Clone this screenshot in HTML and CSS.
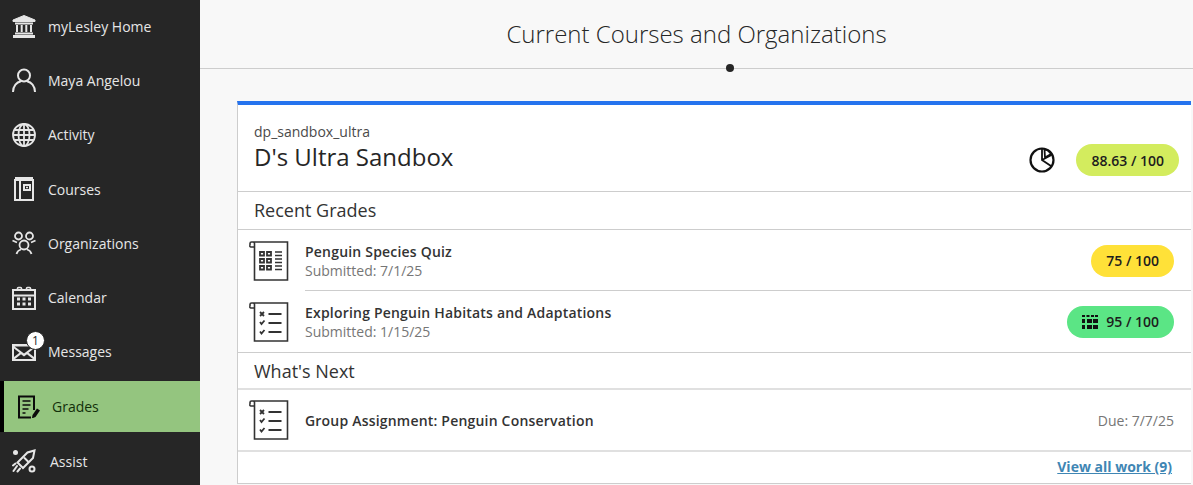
FILE: index.html
```html
<!DOCTYPE html>
<html lang="en">
<head>
  <meta charset="UTF-8">
  <title>Current Courses and Organizations</title>
  <link rel="stylesheet" href="styles.css">
</head>
<body>

  <div class="app">
    <nav class="sidebar">
      <a class="nav-item">
        <svg class="nav-icon" viewBox="0 0 24 24" fill="none" stroke="currentColor" stroke-width="2">
          <path d="M12 1.5 23 6v1.5H1V6z" fill="currentColor" stroke-width="1"/>
          <path d="M3 9.5h18M5 11v7M9.700 11v7M14.300 11v7M19 11v7M3 19.500h18"/>
          <path d="M1 22.500h22" stroke-width="3"/>
        </svg>
        <span>myLesley Home</span>
      </a>
      <a class="nav-item">
        <svg class="nav-icon" viewBox="0 0 24 24" fill="none" stroke="currentColor" stroke-width="2">
          <circle cx="12" cy="7.500" r="6"/>
          <path d="M1 24c0-6 4-10 7.500-10.500M23 24c0-6-4-10-7.500-10.500" stroke-linecap="round"/>
        </svg>
        <span>Maya Angelou</span>
      </a>
      <a class="nav-item">
        <svg class="nav-icon" viewBox="0 0 24 24" fill="none" stroke="currentColor" stroke-width="1.800">
          <circle cx="12" cy="12" r="11"/>
          <ellipse cx="12" cy="12" rx="5.500" ry="11"/>
          <path d="M12 1v22M1 12h22M2.500 7h19M2.500 17h19"/>
        </svg>
        <span>Activity</span>
      </a>
      <a class="nav-item">
        <svg class="nav-icon" viewBox="0 0 24 24" fill="none" stroke="currentColor" stroke-width="2">
          <path d="M3 3h18v20H3zM3 1h18M8 3v20"/>
          <path d="M12 8h6v5h-6z"/>
          <path d="M14 10.500h2" stroke-width="1.500"/>
        </svg>
        <span>Courses</span>
      </a>
      <a class="nav-item">
        <svg class="nav-icon" viewBox="0 0 24 24" fill="none" stroke="currentColor" stroke-width="1.800">
          <circle cx="6.500" cy="5" r="3.500"/>
          <circle cx="17.500" cy="5" r="3.500"/>
          <circle cx="12" cy="14" r="4.500"/>
          <path d="M0.500 9.500 5 11.500M23.500 9.500 19 11.500M4.500 23c.8-2.800 2.500-4 4.500-4.500M19.500 23c-.8-2.800-2.500-4-4.500-4.500"/>
        </svg>
        <span>Organizations</span>
      </a>
      <a class="nav-item">
        <svg class="nav-icon" viewBox="0 0 24 24" fill="none" stroke="currentColor" stroke-width="2">
          <path d="M1 4h22v19H1zM1 9.500h22"/>
          <path d="M5.500 5V2.500a1 1 0 0 1 1-1h2a1 1 0 0 1 1 1V5M14.500 5V2.500a1 1 0 0 1 1-1h2a1 1 0 0 1 1 1V5" stroke-width="1.600"/>
          <path d="M5 13h3M10.500 13h3M16 13h3M5 18h3M10.500 18h3M16 18h3" stroke-width="3"/>
        </svg>
        <span>Calendar</span>
      </a>
      <a class="nav-item">
        <span class="nav-icon-wrap">
          <svg class="nav-icon" viewBox="0 0 24 24" fill="currentColor">
            <path d="M0 4h24v17H0zM2.500 6.500 12 13.500 21.500 6.500zM2 8.500V17l5.500-4.300zM22 8.500 16.500 12.700 22 17zM3 19h18l-6-4.800-3 2.300-3-2.300z" fill-rule="evenodd"/>
          </svg>
          <span class="badge">1</span>
        </span>
        <span>Messages</span>
      </a>
      <a class="nav-item active">
        <svg class="nav-icon" viewBox="0 0 24 24" fill="none" stroke="currentColor" stroke-width="2">
          <path d="M17 15V1.500H2v21h12"/>
          <path d="M5.500 6h8M5.500 10h8M5.500 14h6M5.500 18h3" stroke-width="1.600"/>
          <path d="M16 23l-1 0 .5-3L20 13.500l3 2-4.500 6.500z" fill="currentColor" stroke="none"/>
        </svg>
        <span>Grades</span>
      </a>
      <a class="nav-item assist">
        <svg class="nav-icon" viewBox="0 0 24 24" fill="none" stroke="currentColor" stroke-width="2">
          <path d="M22.500 1.500 21 9 11 19l-5.500-5.500L15.500 3.500z"/>
          <path d="M12 8.500l4.500 4.500"/>
          <path d="M5 17 1.500 22M8 19.500 5.500 22.500M3.500 14.500 1 16.500" stroke-linecap="round"/>
          <circle cx="20" cy="20" r="2.500"/>
          <circle cx="3.500" cy="3.500" r="2.500" fill="currentColor" stroke="none"/>
        </svg>
        <span>Assist</span>
      </a>
    </nav>

    <main class="content">
      <header class="page-head">
        <h1>Current Courses and Organizations</h1>
        <span class="head-dot"></span>
      </header>

      <section class="card">
        <div class="card-head">
          <div class="card-title">
            <div class="course-id">dp_sandbox_ultra</div>
            <h2>D's Ultra Sandbox</h2>
          </div>
          <svg class="pie-icon" viewBox="0 0 26 26" fill="none" stroke="#111" stroke-width="2.200">
            <circle cx="13" cy="13" r="11.500"/>
            <path d="M13 2v11l9 6M13 13 22.500 8M15.500 2.500 19 3.500 22 7l-6 3.500z" stroke-width="1.800"/>
          </svg>
          <span class="pill lime">88.63 / 100</span>
        </div>

        <h3 class="sub-head">Recent Grades</h3>
        <div class="work-list">
          <div class="work-row">
            <svg class="work-icon" viewBox="0 0 40 40" fill="none" stroke="#333" stroke-width="1.600">
              <path d="M1 4.500V2.500A1.500 1.500 0 0 1 2.500 1H38.500V39H5.500V2.500A1.500 1.500 0 0 0 4 1M1 4.500A1 1 0 0 0 2 6H5.500"/>
              <path d="M11 11h4v3.500h-4zM18 11h4v3.500h-4zM11 18h4v3.500h-4zM18 18h4v3.500h-4zM11 25h4v3.500h-4zM18 25h4v3.500h-4z" stroke-width="1.800"/>
              <path d="M26 11h7M26 14.500h7M26 18h7M26 21.500h7M26 25h7M26 28.500h7"/>
            </svg>
            <div class="work-text">
              <div class="work-name">Penguin Species Quiz</div>
              <div class="work-date">Submitted: 7/1/25</div>
            </div>
            <span class="pill yellow">75 / 100</span>
          </div>
          <div class="work-row">
            <svg class="work-icon" viewBox="0 0 40 40" fill="none" stroke="#333" stroke-width="1.600">
              <path d="M1 4.500V2.500A1.500 1.500 0 0 1 2.500 1H38.500V39H5.500V2.500A1.500 1.500 0 0 0 4 1M1 4.500A1 1 0 0 0 2 6H5.500"/>
              <path d="M11 10l4 4M15 10l-4 4M11 20l1.500 2 3-3.500M11 29.500l1.500 2 3-3.500" stroke-width="1.800"/>
              <path d="M19.500 12h13M19.500 21h13M19.500 30h13" stroke-width="1.800"/>
            </svg>
            <div class="work-text">
              <div class="work-name">Exploring Penguin Habitats and Adaptations</div>
              <div class="work-date">Submitted: 1/15/25</div>
            </div>
            <span class="pill green">
              <svg class="pill-icon" viewBox="0 0 16 14" fill="#111">
                <path d="M0 0h3v2H0zM4.500 0h3v2h-3zM9 0h3v2H9zM13 0h3v2h-3zM0 4h3v4H0zM5 4h5v4H5zM11 4h5v4h-5zM0 10h3v4H0zM5 10h5v4H5zM11 10h5v4h-5z"/>
              </svg>
              95 / 100
            </span>
          </div>
        </div>

        <h3 class="sub-head next-head">What's Next</h3>
        <div class="work-row next-row">
          <svg class="work-icon" viewBox="0 0 40 40" fill="none" stroke="#333" stroke-width="1.600">
            <path d="M1 4.500V2.500A1.500 1.500 0 0 1 2.500 1H38.500V39H5.500V2.500A1.500 1.500 0 0 0 4 1M1 4.500A1 1 0 0 0 2 6H5.500"/>
            <path d="M11 10l4 4M15 10l-4 4M11 20l1.500 2 3-3.500M11 29.500l1.500 2 3-3.500" stroke-width="1.800"/>
            <path d="M19.500 12h13M19.500 21h13M19.500 30h13" stroke-width="1.800"/>
          </svg>
          <div class="work-text">
            <div class="work-name">Group Assignment: Penguin Conservation</div>
          </div>
          <span class="due">Due: 7/7/25</span>
        </div>

        <div class="card-foot">
          <a class="view-all" href="#">View all work (9)</a>
        </div>
      </section>
    </main>
  </div>

</body>
</html>
```

FILE: styles.css
```css
* {
  box-sizing: border-box;
}
html,
body {
  margin: 0;
  height: 100%;
  overflow: hidden;
}
body {
  background: #f8f8f8;
  color: #262626;
  font-family: "Open Sans", sans-serif;
  font-size: 14px;
}
.app {
  display: flex;
  height: 485px;
}

/* left nav */
.sidebar {
  flex: 0 0 200px;
  background: #262626;
  color: #e6e6e6;
  margin-top: 0;
  padding-top: 0;
  overflow: hidden;
}
.nav-item {
  display: flex;
  align-items: center;
  gap: 12px;
  height: 54.3px;
  padding-left: 12px;
  position: relative;
  top: -1px;
}
.nav-icon {
  display: block;
  width: 24px;
  height: 24px;
  flex: none;
}
.nav-icon-wrap {
  position: relative;
  flex: none;
}
.badge {
  position: absolute;
  top: -9px;
  left: 14px;
  width: 19px;
  height: 19px;
  border-radius: 50%;
  background: #fff;
  color: #262626;
  font-size: 12px;
  line-height: 19px;
  text-align: center;
  border: 1px solid #262626;
  line-height: 17px;
}
.nav-item.active {
  height: 51px;
  margin: 1px 0 2px 0;
  padding-left: 13px;
  margin-left: 0;
  background: #94c57f;
  border-left: 4px solid #000;
  color: #12300a;
  gap: 11px;
  top: 0;
}
.nav-item.active .nav-icon {
  color: #0b0b0b;
}
.nav-item.assist {
  gap: 14px;
  top: 0;
}

/* main */
.content {
  flex: 1;
  min-width: 0;
}
.page-head {
  height: 69px;
  border-bottom: 1px solid #cdcdcd;
  position: relative;
  text-align: center;
  padding-left: 0;
}
.page-head h1 {
  margin: 0;
  padding-top: 17px;
  font-size: 24px;
  font-weight: 300;
  line-height: 33px;
  color: #262626;
}
.head-dot {
  position: absolute;
  left: 526px;
  top: 64px;
  width: 8px;
  height: 8px;
  border-radius: 50%;
  background: #262626;
}
.card {
  margin: 32px 2px 0 37px;
  height: 383px;
  background: #fff;
  border-top: 4px solid #2573ee;
  border-left: 1px solid #cdcdcd;
  border-bottom: 1px solid #cdcdcd;
}
.card-head {
  display: flex;
  align-items: flex-start;
  height: 87px;
  padding: 18px 12px 0 16px;
  border-bottom: 1px solid #cdcdcd;
}
.card-title {
  flex: 1;
}
.course-id {
  font-size: 14px;
  line-height: 17px;
  color: #4a4a4a;
}
.card-title h2 {
  margin: 0;
  font-size: 24px;
  font-weight: 400;
  line-height: 33px;
}
.pie-icon {
  width: 26px;
  height: 26px;
  margin: 24px 21px 0 0;
}
.pill {
  display: inline-flex;
  align-items: center;
  justify-content: center;
  gap: 8px;
  height: 32px;
  padding: 0 15px;
  border-radius: 16px;
  font-size: 14px;
  font-weight: 600;
  color: #1d1d1d;
  white-space: nowrap;
}
.card-head .pill {
  margin-top: 21px;
}
.lime {
  background: #d3ec5e;
}
.yellow {
  background: #ffe138;
}
.green {
  background: #5be585;
}
.pill-icon {
  width: 16px;
  height: 14px;
}
.sub-head {
  margin: 0;
  height: 38px;
  padding-left: 16px;
  border-bottom: 1px solid #cdcdcd;
  font-size: 18px;
  font-weight: 400;
  line-height: 37px;
  color: #333;
}
.next-head {
  height: 37px;
  line-height: 36px;
  border-top: 0;
  border-bottom-width: 2px;
  border-bottom-color: #e0e0e0;
}
.work-list {
  border-bottom: 1px solid #cdcdcd;
}
.work-row {
  display: flex;
  align-items: center;
  height: 61px;
  padding: 0 17px 0 11px;
}
.work-row + .work-row {
  height: 61px;
  position: relative;
}
.work-row + .work-row::before {
  content: "";
  position: absolute;
  top: -1px;
  left: 67px;
  right: 0;
  border-top: 1px solid #cdcdcd;
}
.work-icon {
  width: 40px;
  height: 40px;
  flex: none;
  margin-right: 16px;
}
.work-text {
  flex: 1;
  min-width: 0;
}
.work-name {
  font-size: 14px;
  font-weight: 600;
  line-height: 19px;
  color: #333;
  letter-spacing: 0.2px;
}
.work-date {
  font-size: 14px;
  line-height: 19px;
  color: #767676;
}
.next-row {
  height: 62px;
  border-bottom: 2px solid #e0e0e0;
}
.due {
  color: #767676;
  font-size: 14px;
}
.card-foot {
  padding: 5px 19px 0 0;
  text-align: right;
}
.view-all {
  font-size: 14px;
  font-weight: 700;
  color: #3f86b4;
  text-decoration: underline;
}
```
